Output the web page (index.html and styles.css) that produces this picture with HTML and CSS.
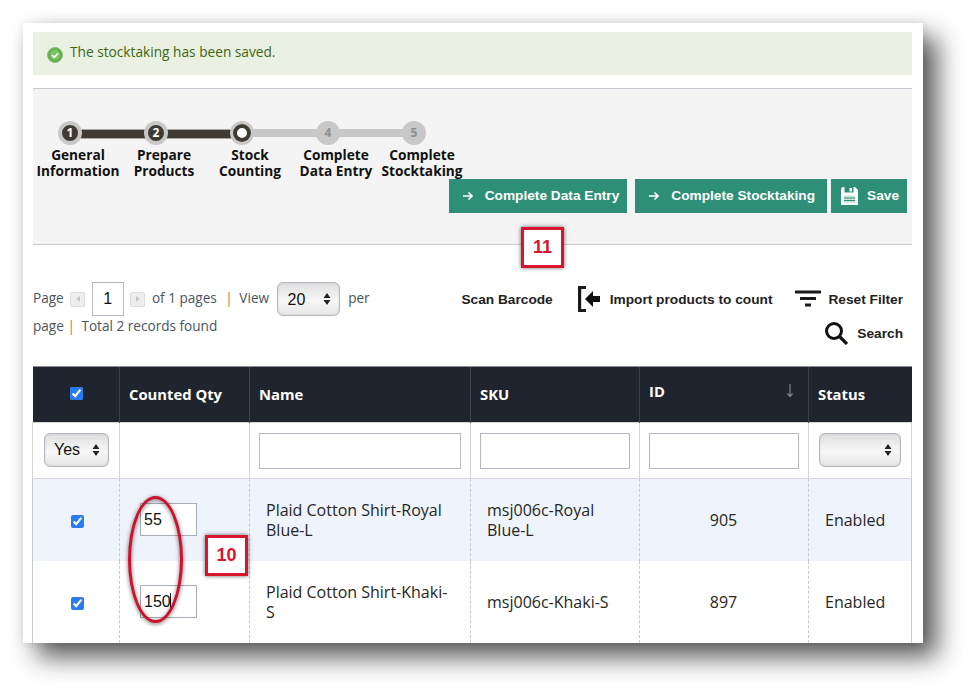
FILE: index.html
```html
<!DOCTYPE html>
<html lang="en">
<head>
<meta charset="utf-8">
<title>Stocktaking</title>
<link rel="stylesheet" href="styles.css">
</head>
<body>
<main class="window">
  <div class="notice">
    <svg class="notice-icon" viewBox="0 0 16 16" width="16" height="16"><circle cx="8" cy="8" r="7.500" fill="#5fb04a" stroke="#8fb98a"/><circle cx="8" cy="8" r="5" fill="#7cc566"/><path d="M5 8.200l2.200 2.100L11 6.300" fill="none" stroke="#fff" stroke-width="1.800"/></svg>
    <span>The stocktaking has been saved.</span>
  </div>

  <section class="panel">
    <ol class="steps">
      <li class="step done"><span class="dot">1</span><span class="step-label">General Information</span></li>
      <li class="step done"><span class="dot">2</span><span class="step-label">Prepare Products</span></li>
      <li class="step current"><span class="dot"></span><span class="step-label">Stock Counting</span></li>
      <li class="step todo"><span class="dot">4</span><span class="step-label">Complete Data Entry</span></li>
      <li class="step todo last"><span class="dot">5</span><span class="step-label">Complete Stocktaking</span></li>
    </ol>
    <div class="actions">
      <button class="btn btn-wide"><svg viewBox="0 0 12 12" width="12" height="12"><path d="M1 6h9M6.500 2.500L10 6l-3.500 3.500" fill="none" stroke="#fff" stroke-width="1.700"/></svg><span class="btn-text">Complete Data Entry</span></button>
      <button class="btn btn-wide btn-long"><svg viewBox="0 0 12 12" width="12" height="12"><path d="M1 6h9M6.500 2.500L10 6l-3.500 3.500" fill="none" stroke="#fff" stroke-width="1.700"/></svg><span class="btn-text">Complete Stocktaking</span></button>
      <button class="btn btn-save"><svg viewBox="0 0 17 18" width="17" height="18"><path d="M1.500 0H14l3 3v15H0V1.500z" fill="#fff"/><path d="M3.500 0h9v5.500h-9z" fill="#2d9076"/><path d="M8.500 1h2.500v3.500H8.500z" fill="#fff"/><path d="M3 8.500h11v7.500H3z" fill="#cfe3dc"/><path d="M3 11h11M3 13.500h11" stroke="#2d9076" stroke-width="1"/></svg><span class="btn-text">Save</span></button>
    </div>
  </section>

  <section class="toolbar">
    <div class="pager">
      <span class="pt">Page</span>
      <span class="page-arrow"><i class="tri tri-left"></i></span>
      <input class="page-input" type="text" value="1">
      <span class="page-arrow"><i class="tri tri-right"></i></span>
      <span class="pt">of 1 pages</span>
      <span class="pt sep sep-wide">|</span>
      <span class="pt">View</span>
      <select class="sel sel-view"><option>20</option></select>
      <span class="pt">per</span>
      <span class="pt">page</span>
      <span class="pt sep sep-tight">|</span>
      <span class="pt">Total 2 records found</span>
    </div>
    <div class="tools">
      <div class="tool-row">
        <span class="tool">Scan Barcode</span>
        <span class="tool tool-import"><svg viewBox="0 0 22 26" width="22" height="26"><path d="M8 1.500H1.600v23H8" fill="none" stroke="#1a1a1a" stroke-width="3.200"/><path d="M7 13l8-8v5h7v6h-7v5z" fill="#111"/></svg>Import products to count</span>
        <span class="tool"><svg viewBox="0 0 26 18" width="26" height="18"><path d="M0 2h26M5 8.500h16M10 15h6" stroke="#1a1a1a" stroke-width="3"/></svg>Reset Filter</span>
      </div>
      <div class="tool-row">
        <span class="tool tool-search"><svg viewBox="0 0 24 24" width="24" height="24"><circle cx="10" cy="10" r="7.500" fill="none" stroke="#111" stroke-width="3"/><path d="M15.500 15.500L23 23" stroke="#111" stroke-width="3.200"/></svg>Search</span>
      </div>
    </div>
  </section>

  <table class="grid">
    <colgroup><col class="c-check"><col class="c-qty"><col class="c-name"><col class="c-sku"><col class="c-id"><col class="c-status"></colgroup>
    <thead>
      <tr>
        <th class="center"><input class="check check-head" type="checkbox" checked></th>
        <th>Counted Qty</th>
        <th>Name</th>
        <th>SKU</th>
        <th class="th-id"><span class="id-title">ID</span><svg class="sort" viewBox="0 0 8 14" width="8" height="14"><path d="M4 0v12M1.500 9.500L4 12.500l2.500-3" fill="none" stroke="#7d838d" stroke-width="1.200"/></svg></th>
        <th>Status</th>
      </tr>
      <tr class="filters">
        <td><select class="sel sel-yes"><option>Yes</option></select></td>
        <td></td>
        <td><input class="filter-input" type="text"></td>
        <td><input class="filter-input" type="text"></td>
        <td><input class="filter-input" type="text"></td>
        <td><select class="sel sel-status"><option></option></select></td>
      </tr>
    </thead>
    <tbody>
      <tr class="row-alt">
        <td class="center"><input class="check" type="checkbox" checked></td>
        <td class="qty-cell"><input class="qty" type="text" value="55"></td>
        <td>Plaid Cotton Shirt-Royal Blue-L</td>
        <td>msj006c-Royal Blue-L</td>
        <td class="center">905</td>
        <td class="cell-status">Enabled</td>
      </tr>
      <tr>
        <td class="center"><input class="check" type="checkbox" checked></td>
        <td class="qty-cell"><span class="qty-wrap"><input class="qty" type="text" value="150"><i class="caret"></i></span></td>
        <td>Plaid Cotton Shirt-Khaki-S</td>
        <td>msj006c-Khaki-S</td>
        <td class="center">897</td>
        <td class="cell-status">Enabled</td>
      </tr>
    </tbody>
  </table>

  <div class="callout callout-11">11</div>
  <div class="callout callout-10">10</div>
  <div class="ring"></div>
</main>
</body>
</html>
```

FILE: styles.css
```css
* { box-sizing: border-box; }
html, body { margin: 0; height: 100%; overflow: hidden; background: #fff; }
body { padding: 23px 55px 0 23px; font-family: "Open Sans", sans-serif; font-size: 14px; color: #333; }

.window {
  position: relative;
  width: 900px;
  height: 620px;
  padding: 9px 11px 0 10px;
  background: #fff;
  box-shadow: 14px 14px 24px rgba(0,0,0,.65), 0 0 10px rgba(0,0,0,.1);
}

.notice {
  display: flex; align-items: center; gap: 7px;
  height: 43px; padding: 0 0 4px 14px;
  background: #eaf1e3; color: #3d6611; font-size: 13.700px;
}
.notice-icon { margin-top: 6px; }

.panel {
  margin-top: 13px; height: 157px;
  padding-top: 32px;
  background: #f4f4f4;
  border-top: 1px solid #c5c9d0; border-bottom: 1px solid #c5c9d0;
}
.steps { display: flex; list-style: none; margin: 0; padding: 0 0 0 2px; height: 58px; }
.step { position: relative; width: 86px; display: flex; flex-direction: column; align-items: center; }
.step::after {
  content: ""; position: absolute; left: 35px; top: 8px; width: 86px; height: 8px; background: #c8c8c8;
}
.step.done::after { background: #3f3a33; border-top: 1px solid #a8a8a8; border-bottom: 1px solid #a8a8a8; }
.step.last::after { display: none; }
.dot {
  position: relative; z-index: 1; width: 24px; height: 24px; margin-right: 16px;
  border-radius: 50%; text-align: center; font-weight: 700; font-size: 12px; line-height: 16px;
  border: 4px solid #c8c8c8;
}
.done .dot { background: #3f3a33; color: #fff; }
.current .dot { background: #fff; border: 0; box-shadow: inset 0 0 0 4px #3f3a33, 0 0 0 3px #c8c8c8; width: 18px; height: 18px; margin: 3px 16px 3px 0; }
.todo .dot { background: #c8c8c8; color: #8f8f8f; }
.step-label { width: 86px; text-align: center; font-weight: 700; font-size: 13.700px; line-height: 15.500px; color: #111; margin-top: 2px; }

.actions { display: flex; justify-content: flex-end; gap: 8px; padding-right: 5px; }
.actions .btn-save { margin-left: -4px; }
.btn {
  display: flex; align-items: center; height: 34px; border: 0; padding: 0 8px 0 13px;
  background: #2d9076; color: #fff; font: 700 13.700px "Liberation Sans", sans-serif;
}
.btn-text { margin-top: -2px; }
.btn-wide svg { margin-right: 11px; }
.btn-long { padding-right: 12px; }
.btn-save { padding-left: 10px; }
.btn-save svg { margin-right: 9px; }

.toolbar { display: flex; justify-content: space-between; padding-top: 37px; height: 121px; }
.pager { width: 342px; line-height: 20px; color: #4b5560; font-size: 13.600px; }
.pager > * { vertical-align: middle; }
.pt { display: inline-block; margin-bottom: 2px; }
.sep { color: #a5814f; margin-left: 3px; margin-right: 3px; }
.sep-wide { margin-left: 5px; }
.sep-tight { margin-left: 0; }
.page-arrow { display: inline-flex; align-items: center; justify-content: center; width: 15px; height: 15px; margin: 0 3px; background: #eee; border: 1px solid #ddd; border-radius: 2px; }
.tri { width: 0; height: 0; border-style: solid; }
.tri-left { border-width: 3px 4px 3px 0; border-color: transparent #c4c4c4 transparent transparent; }
.tri-right { border-width: 3px 0 3px 4px; border-color: transparent transparent transparent #c4c4c4; }
.page-input { width: 32px; height: 34px; border: 1px solid #b4b8c0; text-align: center; font: 16px "Liberation Sans", sans-serif; color: #111; padding: 0; margin: 0; }

.sel {
  appearance: none; -webkit-appearance: none;
  height: 34px; border: 1px solid #b4b8c0; border-radius: 6px;
  background-color: #eee;
  background-image: url("data:image/svg+xml,%3Csvg xmlns='http://www.w3.org/2000/svg' width='8' height='14'%3E%3Cpath d='M4 1l3.500 5h-7zM4 13l-3.500-5h7z' fill='%23222'/%3E%3C/svg%3E"), linear-gradient(#dfdfdf, #f7f7f7 55%, #e6e6e6);
  background-repeat: no-repeat, no-repeat;
  background-position: right 8px center, 0 0;
  font: 16px "Liberation Sans", sans-serif; color: #111;
  padding-left: 9px;
  box-shadow: inset 0 0 2px rgba(0,0,0,.15);
}
.sel-view { width: 63px; margin: 0 5px 0 4px; padding-left: 10px; }
.sel-yes { width: 65px; display: block; margin: -2px 0 0 2px; }
.sel-status { width: 82px; display: block; margin: -2px 0 0 1px; }

.tools { padding-right: 9px; }
.tool-row { display: flex; justify-content: flex-end; gap: 23px; height: 34px; align-items: center; }
.tool { display: flex; align-items: center; gap: 7px; font: 700 13.700px "Liberation Sans", sans-serif; color: #222; }
.tool-import { gap: 10px; margin-left: 2px; }
.tool-search { gap: 9px; }

.grid { width: 879px; margin-left: -1px; table-layout: fixed; border-collapse: collapse; }
.c-check { width: 87px; } .c-qty { width: 130px; } .c-name { width: 221px; } .c-sku { width: 169px; } .c-id { width: 169px; } .c-status { width: 103px; }
.grid th { height: 56px; padding: 0 9px 2px; text-align: left; background: #20242e; color: #fff; font-size: 14.800px; font-weight: 700; border-left: 1px solid #3c414c; border-top: 1px solid #8a8d93; }
.grid th:first-child { border-left: 0; padding-left: 11px; }
.th-id { position: relative; }
.id-title { display: block; margin-top: -5px; }
.sort { position: absolute; right: 14px; top: 17px; }
.center { text-align: center !important; }
.filters td { height: 56px; padding: 0 9px; border: 1px solid #d4d6da; }
.filter-input { display: block; width: 100%; height: 36px; border: 1px solid #b4b8c0; background: #fff; }
.grid tbody td { height: 82px; padding: 0 17px 0 16px; font-size: 16px; line-height: 20px; color: #262626; border-left: 1px dashed #c5c9d0; border-right: 1px dashed #c5c9d0; }
.grid tbody td:first-child { border-left: 1px solid #c5c9d0; padding: 0 16px 0 18px; }
.grid tbody td:last-child { border-right: 1px solid #c5c9d0; }
.row-alt td { background: #eff3fb; }
.qty-cell { padding-left: 20px !important; }
.qty-wrap { position: relative; display: block; width: 57px; }
.qty { display: block; width: 57px; height: 33px; padding: 0 3px; border: 1px solid #a8acb4; background: #fff; font: 16px "Liberation Sans", sans-serif; color: #111; }
.caret { position: absolute; left: 30px; top: 8px; width: 1px; height: 17px; background: #111; }
.cell-status { padding-left: 16px !important; }
.check { width: 13px; height: 13px; margin: 0; accent-color: #2b7bf0; vertical-align: middle; }
.check-head { margin-top: -4px; }

.callout {
  position: absolute; width: 43px; height: 41px;
  display: flex; align-items: center; justify-content: center;
  background: #fff; border: 3px solid #d8152f;
  box-shadow: 0 0 4px rgba(0,0,0,.6);
  color: #d8152f; font: 700 18px "Liberation Sans", sans-serif;
}
.callout-11 { left: 498px; top: 204px; }
.callout-10 { left: 182px; top: 512px; }
.ring {
  position: absolute; left: 105px; top: 473px; width: 55px; height: 127px;
  border: 3px solid #d0112b; border-radius: 50%;
  filter: drop-shadow(0 1px 2px rgba(0,0,0,.6));
}
```
